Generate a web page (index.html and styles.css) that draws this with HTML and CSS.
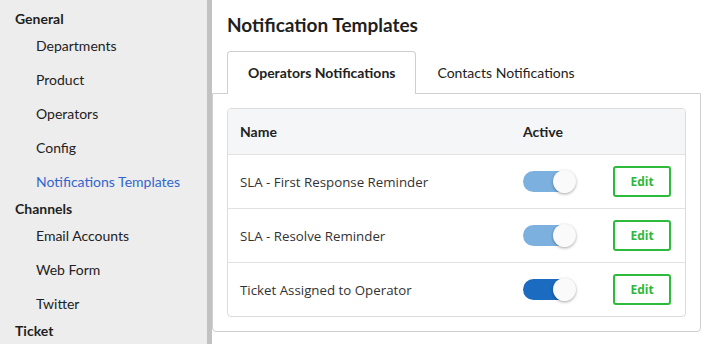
FILE: index.html
```html
<!doctype html>
<html lang="en">
<head>
    <meta charset="UTF-8">
    <title>Notification Templates</title>

    <link rel="stylesheet" href="styles.css">
</head>
<body>

<div class="layout">

    <div class="sidebar">
        <div class="sidebar__group">General</div>
        <a class="sidebar__item">Departments</a>
        <a class="sidebar__item">Product</a>
        <a class="sidebar__item">Operators</a>
        <a class="sidebar__item">Config</a>
        <a class="sidebar__item sidebar__item--active">Notifications Templates</a>
        <div class="sidebar__group">Channels</div>
        <a class="sidebar__item">Email Accounts</a>
        <a class="sidebar__item">Web Form</a>
        <a class="sidebar__item">Twitter</a>
        <div class="sidebar__group">Ticket</div>
    </div>

    <div class="content">
        <h1 class="content__title">Notification Templates</h1>

        <div class="tabs">
            <div class="tabs__tab tabs__tab--active">Operators Notifications</div>
            <div class="tabs__tab">Contacts Notifications</div>
        </div>

        <div class="tab-pane">
            <div class="card">
                <div class="card__row card__row--head">
                    <div class="card__name">Name</div>
                    <div class="card__active">Active</div>
                    <div class="card__action"></div>
                </div>
                <div class="card__row">
                    <div class="card__name">SLA - First Response Reminder</div>
                    <div class="card__active"><span class="switch switch--light"></span></div>
                    <div class="card__action"><button class="btn-edit">Edit</button></div>
                </div>
                <div class="card__row">
                    <div class="card__name">SLA - Resolve Reminder</div>
                    <div class="card__active"><span class="switch switch--light"></span></div>
                    <div class="card__action"><button class="btn-edit">Edit</button></div>
                </div>
                <div class="card__row">
                    <div class="card__name">Ticket Assigned to Operator</div>
                    <div class="card__active"><span class="switch"></span></div>
                    <div class="card__action"><button class="btn-edit">Edit</button></div>
                </div>
            </div>
        </div>
    </div>

</div>

</body>
</html>
```

FILE: styles.css
```css
* {
    margin: 0;
    padding: 0;
    box-sizing: border-box;
}

body {
    font-family: Lato, "Open Sans", sans-serif;
    color: #222;
    background: #fff;
    overflow: hidden;
}

.layout {
    display: flex;
    height: 344px;
}

.sidebar {
    width: 212px;
    flex: none;
    padding-top: 9px;
    background: #ededed;
    border-right: 5px solid #c2c2c2;
    display: flex;
    flex-direction: column;
}

.sidebar__group {
    padding-left: 15px;
    font-size: 14px;
    font-weight: 700;
    line-height: 20px;
    color: #1f1f1f;
}

.sidebar__item {
    padding-left: 36px;
    font-size: 14px;
    line-height: 34px;
    color: #222;
}

.sidebar__item--active {
    color: #3366cc;
}

.content {
    flex: 1;
    padding-right: 12px;
}

.content__title {
    margin: 13px 0 0 15px;
    font-size: 19px;
    font-weight: 700;
    line-height: 24px;
    color: #1f1f1f;
}

.tabs {
    display: flex;
    margin: 14px 0 0 15px;
    position: relative;
    z-index: 1;
}

.tabs__tab {
    padding: 0 20px;
    height: 43px;
    line-height: 42px;
    font-size: 14px;
    color: #222;
    border: 1px solid transparent;
    border-bottom: 0;
}

.tabs__tab--active {
    font-weight: 700;
    background: #fff;
    border-color: #cfcfcf;
    border-radius: 4px 4px 0 0;
}

.tab-pane {
    margin-top: -1px;
    padding: 14px;
    border: 1px solid #cfcfcf;
    border-radius: 0 0 4px 4px;
}

.card {
    border: 1px solid #dcdcdc;
    border-radius: 4px;
    overflow: hidden;
}

.card__row {
    display: flex;
    align-items: center;
    height: 54px;
    padding: 0 14px 0 12px;
    border-top: 1px solid #e2e2e2;
    font-family: "Open Sans", sans-serif;
    font-size: 13.3px;
    color: #333;
}

.card__row--head {
    height: 45px;
    border-top: 0;
    background: #f5f6f8;
    font-family: Lato, sans-serif;
    font-size: 14px;
    font-weight: 700;
    color: #222;
}

.card__name {
    flex: 1;
}

.card__active {
    width: 90px;
    display: flex;
}

.card__action {
    width: 58px;
}

.switch {
    position: relative;
    display: block;
    width: 52px;
    height: 21px;
    border-radius: 11px;
    background: #1b6bc0;
}

.switch--light {
    background: #7cb0de;
}

.switch::after {
    content: "";
    position: absolute;
    right: -1px;
    top: -1px;
    width: 23px;
    height: 23px;
    border-radius: 50%;
    background: #fafafa;
    box-shadow: 0 1px 3px rgba(0, 0, 0, 0.35);
}

.btn-edit {
    width: 58px;
    height: 31px;
    background: #fff;
    border: 2px solid #2dbb3c;
    border-radius: 3px;
    font-family: "Open Sans", sans-serif;
    font-size: 12px;
    font-weight: 700;
    color: #2db83d;
}
```
